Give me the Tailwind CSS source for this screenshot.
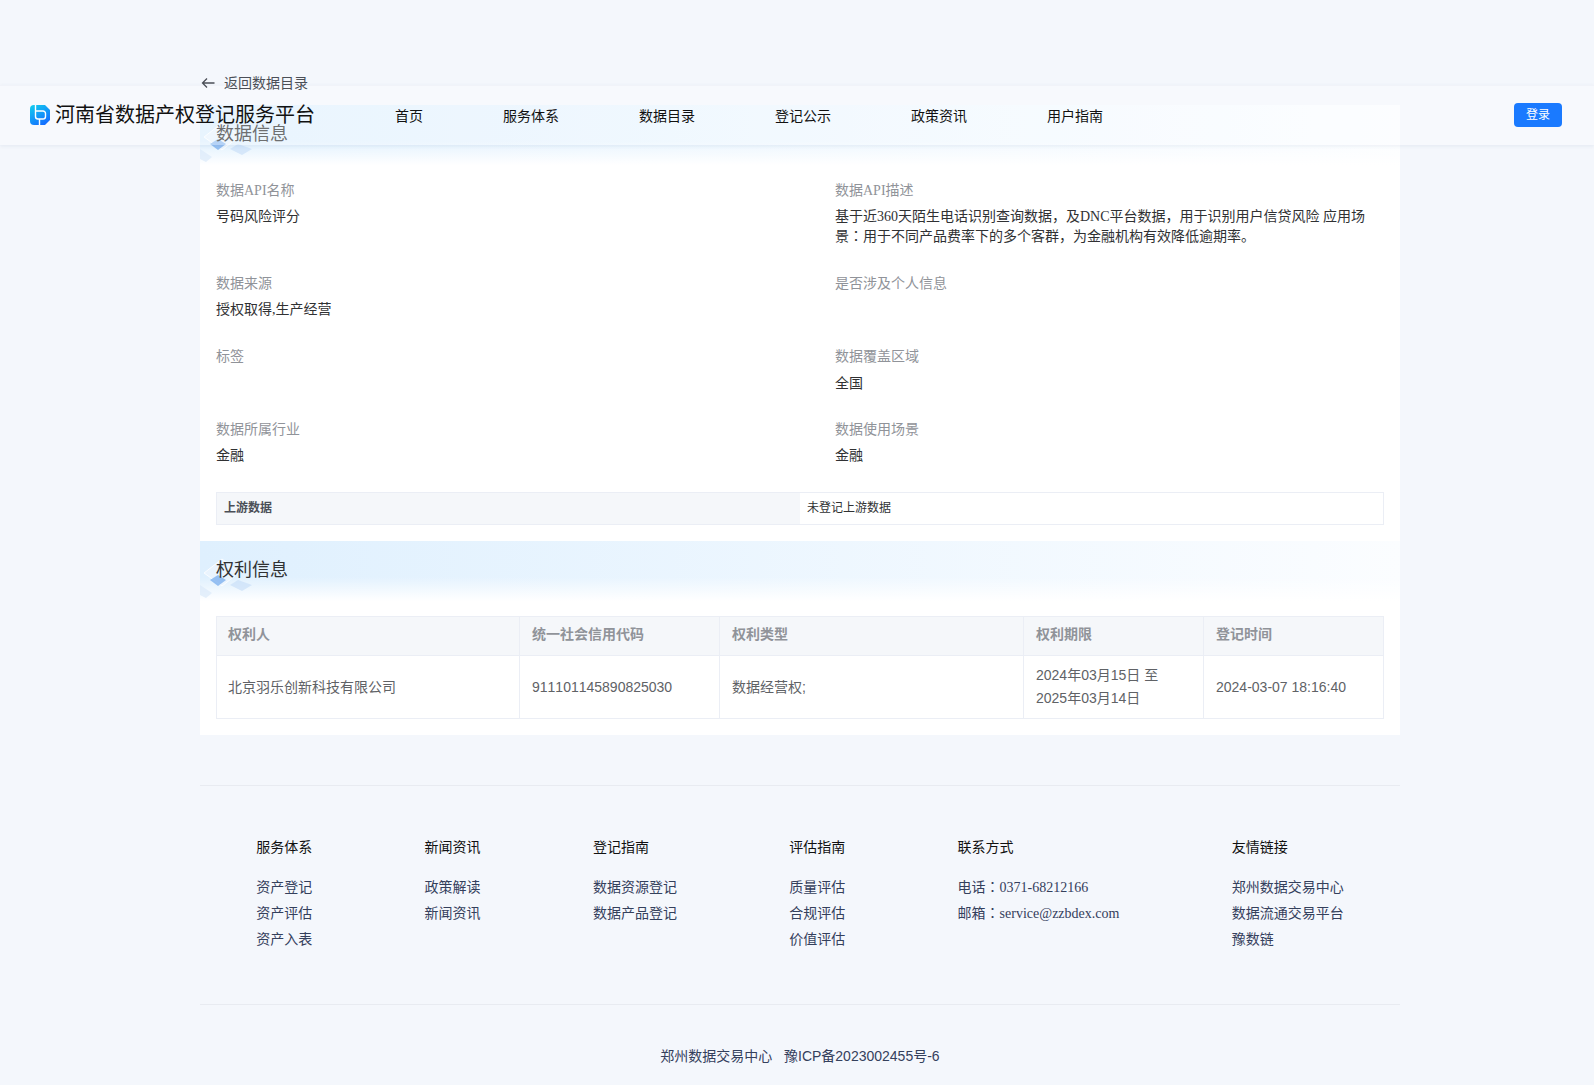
<!DOCTYPE html>
<html lang="zh-CN">
<head>
    <meta charset="UTF-8">
    <meta name="viewport" content="width=device-width, initial-scale=1.0">
    <script src="https://cdn.jsdelivr.net/npm/@tailwindcss/browser@4"></script>
    <title>河南省数据产权登记服务平台</title>
</head>
<body class="relative h-[1085px] overflow-hidden bg-[#f4f7fc] font-['Liberation_Serif','Noto_Sans_CJK_SC',serif] text-sm text-[#303133]">

    <!-- 顶部导航,半透明盖在内容上 -->
    <header class="absolute left-0 right-0 top-[85px] z-10 flex h-[60px] items-center border-t border-[#f1f3f9] bg-white/30 pl-[30px] pr-8 shadow-[0_1px_4px_rgba(30,60,120,0.08)] font-['Liberation_Sans','Noto_Sans_CJK_SC',sans-serif]">
        <div class="-mt-0.5 flex w-[365px] items-center gap-[5px]">
            <svg class="h-5 w-5 shrink-0" viewBox="0 0 20 20">
                <defs>
                    <linearGradient id="logo" x1="0" y1="0" x2="0.6" y2="1">
                        <stop offset="0" stop-color="#12d0ee"/>
                        <stop offset="1" stop-color="#1470ff"/>
                    </linearGradient>
                </defs>
                <path d="M4 0h11l5 5v10l-5 5H4a4 4 0 0 1-4-4V4a4 4 0 0 1 4-4z" fill="url(#logo)"/>
                <path d="M5.500 0v11.500a2.500 2.500 0 0 0 2.500 2.500h5a2.500 2.500 0 0 0 2.500-2.500V8.500a2.500 2.500 0 0 0-2.500-2.500H5.500M9.500 14v6" fill="none" stroke="#fff" stroke-width="1.400"/>
            </svg>
            <span class="whitespace-nowrap text-xl leading-7 text-[#111]">河南省数据产权登记服务平台</span>
        </div>
        <nav class="flex gap-20 text-[#111]">
            <a href="#">首页</a>
            <a href="#">服务体系</a>
            <a href="#">数据目录</a>
            <a href="#">登记公示</a>
            <a href="#">政策资讯</a>
            <a href="#">用户指南</a>
        </nav>
        <button class="-mt-0.5 ml-auto h-6 w-12 rounded bg-[#1a7aff] text-xs text-white">登录</button>
    </header>

    <main class="ml-[200px] w-[1200px] pt-[73px]">
        <a href="#" class="relative z-20 flex h-5 items-center font-['Liberation_Sans','Noto_Sans_CJK_SC',sans-serif] text-[#4b4f57]">
            <svg class="ml-px h-3.5 w-3.5" viewBox="0 0 14 14" fill="none" stroke="#4b4f57" stroke-width="1.300">
                <path d="M1.500 7h12M6 2.500 1.500 7 6 11.500"/>
            </svg>
            <span class="ml-[9px]">返回数据目录</span>
        </a>

        <section class="mt-3 bg-white pb-4">
            <!-- 数据信息 -->
            <div class="relative h-[60px] overflow-hidden bg-gradient-to-r from-[#dff0fe] to-[#fbfdff]">
                <div class="absolute inset-0 bg-gradient-to-b from-transparent from-[60%] to-white"></div>
                <svg class="absolute bottom-0 left-0 h-[56px] w-[60px] blur-[0.6px]" viewBox="0 0 60 56">
                    <path d="M4 28 22 14l18 13-18 14z" fill="#eef5fd" fill-opacity="0.7" stroke="#fff" stroke-opacity="0.8"/>
                    <path d="M10 35l8-5 8 5-8 6z" fill="#6fa8ec" fill-opacity="0.7"/>
                    <path d="M30 40l8-5 14 5-10 6z" fill="#c4dcf7" fill-opacity="0.6"/>
                    <path d="M0 40l12 8-6 5-6-3z" fill="#dbe9fa" fill-opacity="0.7"/>
                </svg>
                <h2 class="relative pl-4 pt-4 text-lg leading-[26px] text-[#303133]">数据信息</h2>
            </div>

            <div class="grid grid-cols-[619px_1fr] px-4 pt-4">
                <div class="mb-[27px]">
                    <div class="leading-5 text-[#909399]">数据API名称</div>
                    <div class="mt-1.5 leading-5">号码风险评分</div>
                </div>
                <div class="mb-[27px]">
                    <div class="leading-5 text-[#909399]">数据API描述</div>
                    <div class="mt-1.5 w-[540px] leading-5">基于近360天陌生电话识别查询数据，及DNC平台数据，用于识别用户信贷风险 应用场景<span lang="zh-Hant" class="font-['Noto_Sans_CJK_TC'] leading-none">：</span>用于不同产品费率下的多个客群，为金融机构有效降低逾期率。</div>
                </div>
                <div class="mb-[27px]">
                    <div class="leading-5 text-[#909399]">数据来源</div>
                    <div class="mt-1.5 leading-5">授权取得,生产经营</div>
                </div>
                <div class="mb-[27px]">
                    <div class="leading-5 text-[#909399]">是否涉及个人信息</div>
                </div>
                <div class="mb-[27px]">
                    <div class="leading-5 text-[#909399]">标签</div>
                </div>
                <div class="mb-[26px]">
                    <div class="leading-5 text-[#909399]">数据覆盖区域</div>
                    <div class="mt-[7px] leading-5">全国</div>
                </div>
                <div class="mb-[26px]">
                    <div class="leading-5 text-[#909399]">数据所属行业</div>
                    <div class="mt-1.5 leading-5">金融</div>
                </div>
                <div class="mb-[26px]">
                    <div class="leading-5 text-[#909399]">数据使用场景</div>
                    <div class="mt-1.5 leading-5">金融</div>
                </div>
            </div>

            <div class="mx-4 grid h-[33px] grid-cols-[583px_1fr] border border-[#ebeef5] font-['Liberation_Sans','Noto_Sans_CJK_SC',sans-serif] text-xs leading-[30px]">
                <div class="bg-[#f5f7fa] pl-[7px] font-bold text-[#4b4f57]">上游数据</div>
                <div class="pl-[7px] text-[#303133]">未登记上游数据</div>
            </div>

            <!-- 权利信息 -->
            <div class="relative mt-4 h-[60px] overflow-hidden bg-gradient-to-r from-[#dff0fe] to-[#fbfdff]">
                <div class="absolute inset-0 bg-gradient-to-b from-transparent from-[60%] to-white"></div>
                <svg class="absolute bottom-0 left-0 h-[56px] w-[60px] blur-[0.6px]" viewBox="0 0 60 56">
                    <path d="M4 28 22 14l18 13-18 14z" fill="#eef5fd" fill-opacity="0.7" stroke="#fff" stroke-opacity="0.8"/>
                    <path d="M10 35l8-5 8 5-8 6z" fill="#6fa8ec" fill-opacity="0.7"/>
                    <path d="M30 40l8-5 14 5-10 6z" fill="#c4dcf7" fill-opacity="0.6"/>
                    <path d="M0 40l12 8-6 5-6-3z" fill="#dbe9fa" fill-opacity="0.7"/>
                </svg>
                <h2 class="relative pl-4 pt-4 text-lg leading-[26px] text-[#303133]">权利信息</h2>
            </div>

            <div class="mx-4 mt-[15px]">
                <table class="w-full table-fixed border-collapse font-['Liberation_Sans','Noto_Sans_CJK_SC',sans-serif] text-sm leading-[23px] text-[#606266]">
                    <colgroup>
                        <col class="w-[303px]">
                        <col class="w-[200px]">
                        <col class="w-[304px]">
                        <col class="w-[180px]">
                        <col>
                    </colgroup>
                    <thead>
                        <tr class="h-[39px] bg-[#f5f7fa] text-left font-bold text-[#909399]">
                            <th class="border border-[#ebeef5] pb-[3px] pl-[11px] pr-3">权利人</th>
                            <th class="border border-[#ebeef5] px-3 pb-[3px]">统一社会信用代码</th>
                            <th class="border border-[#ebeef5] px-3 pb-[3px]">权利类型</th>
                            <th class="border border-[#ebeef5] px-3 pb-[3px]">权利期限</th>
                            <th class="border border-[#ebeef5] px-3 pb-[3px]">登记时间</th>
                        </tr>
                    </thead>
                    <tbody>
                        <tr class="h-[63px]">
                            <td class="border border-[#ebeef5] pl-[11px] pr-3">北京羽乐创新科技有限公司</td>
                            <td class="border border-[#ebeef5] px-3 [font-kerning:none]">911101145890825030</td>
                            <td class="border border-[#ebeef5] px-3">数据经营权;</td>
                            <td class="border border-[#ebeef5] px-3">2024年03月15日 至 2025年03月14日</td>
                            <td class="border border-[#ebeef5] px-3">2024-03-07 18:16:40</td>
                        </tr>
                    </tbody>
                </table>
            </div>
        </section>

        <footer class="mt-[50px]">
            <div class="flex justify-around border-y border-[#e8ebf1] pb-[54px] pt-[52px] text-[#34405c]">
                <div>
                    <h3 class="mb-5 leading-5 text-[#111]">服务体系</h3>
                    <ul class="space-y-1.5 leading-5">
                        <li>资产登记</li>
                        <li>资产评估</li>
                        <li>资产入表</li>
                    </ul>
                </div>
                <div>
                    <h3 class="mb-5 leading-5 text-[#111]">新闻资讯</h3>
                    <ul class="space-y-1.5 leading-5">
                        <li>政策解读</li>
                        <li>新闻资讯</li>
                    </ul>
                </div>
                <div>
                    <h3 class="mb-5 leading-5 text-[#111]">登记指南</h3>
                    <ul class="space-y-1.5 leading-5">
                        <li>数据资源登记</li>
                        <li>数据产品登记</li>
                    </ul>
                </div>
                <div>
                    <h3 class="mb-5 leading-5 text-[#111]">评估指南</h3>
                    <ul class="space-y-1.5 leading-5">
                        <li>质量评估</li>
                        <li>合规评估</li>
                        <li>价值评估</li>
                    </ul>
                </div>
                <div>
                    <h3 class="mb-5 leading-5 text-[#111]">联系方式</h3>
                    <ul class="space-y-1.5 leading-5">
                        <li>电话<span lang="zh-Hant" class="font-['Noto_Sans_CJK_TC'] leading-none">：</span>0371-68212166</li>
                        <li>邮箱<span lang="zh-Hant" class="font-['Noto_Sans_CJK_TC'] leading-none">：</span>service@zzbdex.com</li>
                    </ul>
                </div>
                <div>
                    <h3 class="mb-5 leading-5 text-[#111]">友情链接</h3>
                    <ul class="space-y-1.5 leading-5">
                        <li>郑州数据交易中心</li>
                        <li>数据流通交易平台</li>
                        <li>豫数链</li>
                    </ul>
                </div>
            </div>
            <p class="pt-[41px] text-center font-['Liberation_Sans','Noto_Sans_CJK_SC',sans-serif] leading-5 text-[#34405c]">郑州数据交易中心&nbsp;&nbsp; 豫ICP备2023002455号-6</p>
        </footer>
    </main>
</body>
</html>
